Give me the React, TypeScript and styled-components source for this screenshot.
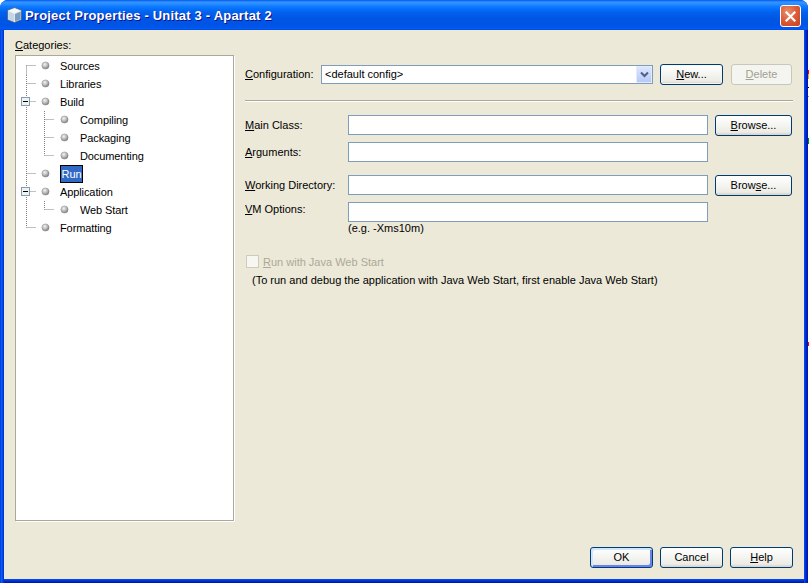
import React from "react";
import styled, { createGlobalStyle } from "styled-components";

const GlobalStyle = createGlobalStyle`
  html, body {
    margin: 0;
    padding: 0;
    background: #fff;
  }
  body {
    font-family: "Liberation Sans", Arial, sans-serif;
    font-size: 11px;
    color: #000;
  }
`;

const Desktop = styled.div`
  display: flex;
  width: 809px;
  height: 583px;
  overflow: hidden;
`;

// 1px of whatever was behind the dialog
const BehindStrip = styled.div`
  width: 1px;
  background: linear-gradient(
    to bottom,
    #fff 70px,
    #f00 70px,
    #f00 74px,
    #fa0 74px,
    #fa0 79px,
    #fff 79px,
    #fff 87px,
    #000 87px,
    #000 88px,
    #fff 88px,
    #fff 96px,
    #7f9db9 96px,
    #7f9db9 97px,
    #fff 97px,
    #fff 138px,
    #080 138px,
    #080 144px,
    #fff 144px,
    #fff 342px,
    #f00 342px,
    #f00 346px,
    #fff 346px
  );
`;

const Window = styled.div`
  flex: 1;
  display: flex;
  flex-direction: column;
  background: #0831d9;
  border-radius: 8px 8px 0 0;
  overflow: hidden;
`;

const TitleBar = styled.div`
  display: flex;
  align-items: center;
  height: 30px;
  padding: 0 7px 0 7px;
  gap: 3px;
  background: linear-gradient(
    to bottom,
    #0058ee 0,
    #3593ff 2px,
    #288eff 4px,
    #127dff 6px,
    #036ffc 9px,
    #0262ee 12px,
    #0057e5 18px,
    #0054e3 24px,
    #0055eb 27px,
    #005bf5 29px,
    #0046d5 30px
  );
`;

const TitleText = styled.span`
  flex: 1;
  color: #fff;
  font-size: 13px;
  font-weight: bold;
  letter-spacing: 0.2px;
  text-shadow: 1px 1px 0 #0f1089;
  white-space: nowrap;
  margin-top: 1px;
`;

const CloseButton = styled.div`
  display: flex;
  align-items: center;
  justify-content: center;
  width: 19px;
  height: 20px;
  border: 1px solid #fff;
  border-radius: 3px;
  margin-top: 2px;
  background: radial-gradient(circle at 35% 30%, #e8916f 0, #dd5f3a 45%, #c5401c 100%);
`;

const WindowFrame = styled.div`
  flex: 1;
  display: flex;
  padding: 0 4px 4px;
  min-height: 0;
  background: linear-gradient(
    to right,
    #0a3fe0 0,
    #0a3fe0 1px,
    #0b5cf5 1px,
    #0b5cf5 2px,
    #0048e8 2px,
    #0048e8 3px,
    #0038d8 3px,
    #0038d8 calc(100% - 4px),
    #0048e8 calc(100% - 4px),
    #0048e8 calc(100% - 3px),
    #0030d8 calc(100% - 3px),
    #0030d8 calc(100% - 2px),
    #0020c0 calc(100% - 2px),
    #0020c0 calc(100% - 1px),
    #0018b0 calc(100% - 1px)
  );
`;

const Body = styled.div`
  flex: 1;
  display: flex;
  background: #ece9d8;
  padding: 10px 11px 11px 11px;
  gap: 11px;
  box-shadow: 0 1px 0 #0048e8, 0 2px 0 #0038d8, 0 3px 0 #0028c8, 0 4px 0 #0018b0;
`;

const Sidebar = styled.div`
  width: 219px;
  display: flex;
  flex-direction: column;
  padding-bottom: 47px;
`;

const SidebarLabel = styled.label`
  line-height: 13px;
  margin-top: -1px;
  margin-bottom: 3px;
`;

const Mnemonic = styled.span`
  text-decoration: underline;
`;

const Tree = styled.div`
  flex: 1;
  display: flex;
  flex-direction: column;
  padding-top: 1px;
  background: #fff;
  border: 1px solid #aca899;
  box-shadow: 1px 1px 0 #fff;
`;

const TreeRow = styled.div`
  display: flex;
  align-items: center;
  height: 18px;
  flex: none;
`;

const TreeLabel = styled.span<{ $selected?: boolean }>`
  display: flex;
  align-items: center;
  height: 18px;
  box-sizing: border-box;
  white-space: nowrap;
  letter-spacing: -0.1px;
  min-width: ${(p) => (p.$selected ? "23px" : "0")};
  justify-content: ${(p) => (p.$selected ? "center" : "flex-start")};
  color: ${(p) => (p.$selected ? "#fff" : "#000")};
  background: ${(p) => (p.$selected ? "#316ac5" : "transparent")};
  outline: ${(p) => (p.$selected ? "1px solid #000" : "none")};
  outline-offset: -1px;
`;

const Main = styled.div`
  flex: 1;
  display: flex;
  flex-direction: column;
  padding-top: 24px;
`;

const ConfigRow = styled.div`
  display: flex;
  align-items: center;
  height: 21px;
`;

const ConfigLabel = styled.label`
  width: 76px;
  flex: none;
  margin-top: -1px;
`;

const Combo = styled.div`
  width: 332px;
  height: 19px;
  box-sizing: border-box;
  display: flex;
  align-items: center;
  justify-content: space-between;
  background: #fff;
  border: 1px solid #7f9db9;
  padding: 0 0 0 3px;
  margin-right: 7px;
`;

const ComboValue = styled.span`
  margin-top: -2px;
`;

const ComboArrow = styled.div`
  width: 16px;
  height: 17px;
  display: flex;
  align-items: center;
  justify-content: center;
  background: linear-gradient(to bottom, #dde6fd, #b7c9f6);
  border: 1px solid #e1eafe;
  box-sizing: border-box;
  border-radius: 1px;
`;

const Button = styled.button<{ $width?: number; $default?: boolean; $focused?: boolean }>`
  width: ${(p) => p.$width ?? 63}px;
  height: 21px;
  box-sizing: border-box;
  padding: 0 0 2px;
  flex: none;
  font: inherit;
  color: #000;
  border: 1px solid #003c74;
  border-radius: 3px;
  background: linear-gradient(to bottom, #fff 0, #f4f4f0 50%, #ecebe5 85%, #d6d0c5 100%);
  box-shadow: ${(p) =>
    p.$default
      ? "inset 2px 2px 0 #cee7ff, inset -2px -2px 0 #6982ee"
      : p.$focused
        ? "inset 0 0 0 1px #f4f4f0"
        : "none"};

  &:disabled {
    color: #a1a192;
    border-color: #c9c7ba;
    background: #f4f4f0;
  }
`;

const ConfigDelete = styled(Button)`
  margin-left: 8px;
`;

const Separator = styled.div`
  height: 1px;
  margin-top: 15px;
  background: #aca899;
  border-bottom: 1px solid #fff;
  width: 548px;
`;

const FormGrid = styled.div`
  display: grid;
  grid-template-columns: 103px 360px 77px;
  grid-template-rows: 27px 33px 27px 20px auto;
  margin-top: 13px;
`;

const FieldLabel = styled.label<{ $raised?: boolean }>`
  line-height: 13px;
  padding-top: ${(p) => (p.$raised ? "1px" : "4px")};
`;

const TextField = styled.input`
  width: 360px;
  height: 20px;
  box-sizing: border-box;
  padding: 0 3px;
  margin: 0;
  background: #fff;
  border: 1px solid #7f9db9;
  font: inherit;
`;

const BrowseButton = styled(Button)`
  margin-left: 7px;
  width: 77px;
`;

const HintText = styled.div`
  grid-column: 2;
  line-height: 13px;
`;

const CheckRow = styled.div`
  display: flex;
  align-items: center;
  gap: 4px;
  height: 13px;
  margin-top: 20px;
  padding-left: 1px;
  color: #aca899;
`;

const DisabledCheck = styled.input`
  appearance: none;
  width: 13px;
  height: 13px;
  margin: 0;
  box-sizing: border-box;
  background: #f7f6f0;
  border: 1px solid #cdcbbd;
`;

const NoteText = styled.div`
  margin-top: 6px;
  padding-left: 7px;
  line-height: 13px;
`;

const Footer = styled.div`
  margin-top: auto;
  display: flex;
  justify-content: flex-end;
  gap: 7px;
`;

const dot = "1 1";

interface TreeItem {
  label: string;
  level: 0 | 1;
  expander?: boolean;
  selected?: boolean;
  lastChild?: boolean;
  lastRoot?: boolean;
}

const items: TreeItem[] = [
  { label: "Sources", level: 0 },
  { label: "Libraries", level: 0 },
  { label: "Build", level: 0, expander: true },
  { label: "Compiling", level: 1 },
  { label: "Packaging", level: 1 },
  { label: "Documenting", level: 1, lastChild: true },
  { label: "Run", level: 0, selected: true },
  { label: "Application", level: 0, expander: true },
  { label: "Web Start", level: 1, lastChild: true },
  { label: "Formatting", level: 0, lastRoot: true },
];

// connector lines, expander and grey bullet in front of one tree row
const RowGuides = ({ item, first }: { item: TreeItem; first: boolean }) => {
  const x0 = 10.5;
  const x1 = 28.5;
  const mid = 8.5;
  const width = item.level === 0 ? 44 : 64;
  const nested = item.level === 1;
  const gradId = `ball-${item.label.replace(" ", "")}`;
  const cx = nested ? 48.5 : 29.5;
  return (
    <svg width={width} height={18} style={{ flex: "none" }}>
      <defs>
        <radialGradient id={gradId} cx="40%" cy="35%" r="70%">
          <stop offset="0" stopColor="#f4f4f4" />
          <stop offset="0.55" stopColor="#b6b6b6" />
          <stop offset="1" stopColor="#6e6e6e" />
        </radialGradient>
      </defs>
      <line
        x1={x0}
        x2={x0}
        y1={first ? mid : 0}
        y2={item.lastRoot ? mid : 18}
        stroke="#808080"
        strokeDasharray={dot}
      />
      {!nested && <line x1={x0} x2={20} y1={mid} y2={mid} stroke="#808080" strokeDasharray={dot} />}
      {nested && (
        <>
          <line x1={x1} x2={x1} y1={0} y2={item.lastChild ? mid : 18} stroke="#808080" strokeDasharray={dot} />
          <line x1={x1} x2={38} y1={mid} y2={mid} stroke="#808080" strokeDasharray={dot} />
        </>
      )}
      {item.expander && (
        <g>
          <rect x={5.5} y={4.5} width={8} height={8} fill="#f2f2ec" stroke="#7f9db9" />
          <line x1={7} x2={12} y1={8.5} y2={8.5} stroke="#000" />
        </g>
      )}
      <circle cx={cx} cy={mid} r={3.6} fill={`url(#${gradId})`} stroke="#8f8f8f" strokeWidth={0.5} />
    </svg>
  );
};

const NetBeansCube = () => (
  <svg width={15} height={16} viewBox="0 0 15 16" style={{ flex: "none" }}>
    <path d="M7.5 0.5 L14 3 Q14.5 3.3 14.5 4 V12 Q14.5 12.6 14 13 L7.5 15.5 L1 13 Q0.5 12.6 0.5 12 V4 Q0.5 3.3 1 3 Z" fill="#dfe9f2" stroke="#46607f" strokeWidth={0.8} />
    <path d="M1.5 3.7 L7.5 1.4 L13.5 3.7 L7.5 6.2 Z" fill="#f4f8fb" />
    <path d="M1.3 4.6 L7 7 V14.4 L1.3 12.2 Z" fill="#c3d6e6" />
    <path d="M13.7 4.6 L8 7 V14.4 L13.7 12.2 Z" fill="#7d9dbf" />
  </svg>
);

export default function App() {
  return (
    <>
      <GlobalStyle />
      <Desktop>
        <Window>
          <TitleBar>
            <NetBeansCube />
            <TitleText>Project Properties - Unitat 3 - Apartat 2</TitleText>
            <CloseButton>
              <svg width={11} height={11} viewBox="0 0 11 11">
                <path d="M1.5 1.5 L9.5 9.5 M9.5 1.5 L1.5 9.5" stroke="#fff" strokeWidth={2.2} strokeLinecap="square" />
              </svg>
            </CloseButton>
          </TitleBar>
          <WindowFrame>
            <Body>
              <Sidebar>
                <SidebarLabel>
                  <Mnemonic>C</Mnemonic>ategories:
                </SidebarLabel>
                <Tree>
                  {items.map((item, i) => (
                    <TreeRow key={item.label}>
                      <RowGuides item={item} first={i === 0} />
                      <TreeLabel $selected={item.selected}>{item.label}</TreeLabel>
                    </TreeRow>
                  ))}
                </Tree>
              </Sidebar>
              <Main>
                <ConfigRow>
                  <ConfigLabel>
                    <Mnemonic>C</Mnemonic>onfiguration:
                  </ConfigLabel>
                  <Combo>
                    <ComboValue>&lt;default config&gt;</ComboValue>
                    <ComboArrow>
                      <svg width={9} height={7} viewBox="0 0 9 7">
                        <path d="M1 1.5 L4.5 5 L8 1.5" fill="none" stroke="#4d6185" strokeWidth={2} />
                      </svg>
                    </ComboArrow>
                  </Combo>
                  <Button $focused>
                    <Mnemonic>N</Mnemonic>ew...
                  </Button>
                  <ConfigDelete $width={61} disabled>
                    <Mnemonic>D</Mnemonic>elete
                  </ConfigDelete>
                </ConfigRow>
                <Separator />
                <FormGrid>
                  <FieldLabel>
                    <Mnemonic>M</Mnemonic>ain Class:
                  </FieldLabel>
                  <TextField />
                  <BrowseButton>
                    <Mnemonic>B</Mnemonic>rowse...
                  </BrowseButton>

                  <FieldLabel>
                    <Mnemonic>A</Mnemonic>rguments:
                  </FieldLabel>
                  <TextField />
                  <span />

                  <FieldLabel>
                    <Mnemonic>W</Mnemonic>orking Directory:
                  </FieldLabel>
                  <TextField />
                  <BrowseButton>
                    Brow<Mnemonic>s</Mnemonic>e...
                  </BrowseButton>

                  <FieldLabel $raised>
                    <Mnemonic>V</Mnemonic>M Options:
                  </FieldLabel>
                  <TextField />
                  <span />

                  <HintText>(e.g. -Xms10m)</HintText>
                </FormGrid>
                <CheckRow>
                  <DisabledCheck type="checkbox" disabled />
                  <span>
                    <Mnemonic>R</Mnemonic>un with Java Web Start
                  </span>
                </CheckRow>
                <NoteText>(To run and debug the application with Java Web Start, first enable Java Web Start)</NoteText>
                <Footer>
                  <Button $default>OK</Button>
                  <Button>Cancel</Button>
                  <Button>
                    <Mnemonic>H</Mnemonic>elp
                  </Button>
                </Footer>
              </Main>
            </Body>
          </WindowFrame>
        </Window>
        <BehindStrip />
      </Desktop>
    </>
  );
}
